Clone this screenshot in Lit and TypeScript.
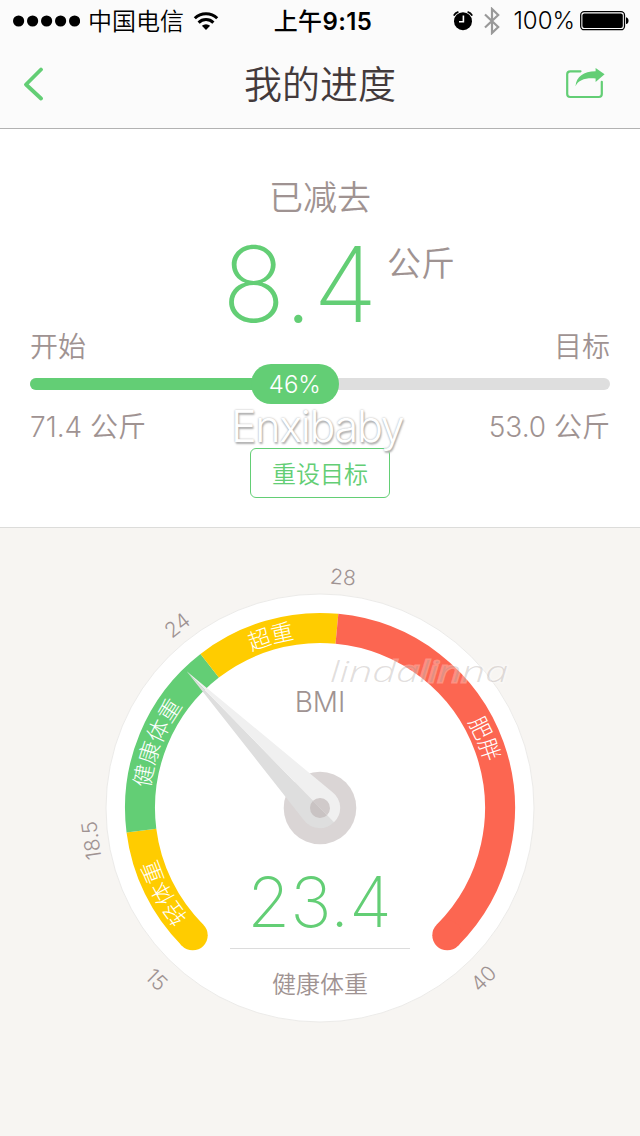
import { LitElement, html, svg, css } from "lit";
import { customElement, property } from "lit/decorators.js";

const CX = 320;
const CY = 280;
const MIN = 15;
const MAX = 40;

/** Dial angle in degrees, measured clockwise from twelve o'clock. */
const angleOf = (bmi: number) => -135 + ((bmi - MIN) / (MAX - MIN)) * 270;

const point = (deg: number, r: number) => {
  const a = (deg * Math.PI) / 180;
  return [CX + r * Math.sin(a), CY - r * Math.cos(a)];
};

const arc = (from: number, to: number, r: number) => {
  const [x1, y1] = point(from, r);
  const [x2, y2] = point(to, r);
  return `M${x1} ${y1}A${r} ${r} 0 ${to - from > 180 ? 1 : 0} 1 ${x2} ${y2}`;
};

const ZONES = [
  { id: "light", from: 15, to: 18.5, label: "轻体重", color: "#ffcc00", mid: -118.5, cap: true },
  { id: "healthy", from: 18.5, to: 24, label: "健康体重", color: "#63ce75", mid: -68.3, cap: false },
  { id: "over", from: 24, to: 28, label: "超重", color: "#ffcc00", mid: -16, cap: false },
  { id: "obese", from: 28, to: 40, label: "肥胖", color: "#fc6651", mid: 67.2, cap: true },
];

/** Scale labels: where each sits on the rim and how far it is turned. */
const TICKS = [
  { value: 15, at: -136.4, turn: 45, r: 237 },
  { value: 18.5, at: -98.1, turn: -98, r: 231 },
  { value: 24, at: -38, turn: -38, r: 232 },
  { value: 28, at: 5.7, turn: 5, r: 232 },
  { value: 40, at: 136.2, turn: -45, r: 236 },
];

@customElement("status-bar")
export class StatusBar extends LitElement {
  static styles = css`
    :host {
      display: grid;
      grid-template-columns: 1fr auto 1fr;
      align-items: center;
      height: 41px;
      padding: 0 11px 0 13px;
      color: #000;
      font-size: 24px;
    }
    .side { display: flex; align-items: center; }
    .right { justify-content: flex-end; }
    .carrier { margin: 0 9px 2px 8px; font-size: 24px; }
    .time { padding: 0 0 2px 4px; font-weight: 600; letter-spacing: 0.4px; }
    .time span { font-weight: 500; }
    .alarm { margin-right: 11px; }
    .bt { margin-right: 13px; }
    .percent { margin-right: 5px; }
    svg { display: block; flex: none; }
  `;

  render() {
    return html`
      <div class="side">
        <svg width="67" height="12" viewBox="0 0 67 12">
          ${[0, 1, 2, 3, 4].map((i) => svg`<circle cx=${5.6 + i * 14} cy="6" r="5.6"/>`)}
        </svg>
        <span class="carrier">中国电信</span>
        <svg width="26" height="20" viewBox="0 0 26 20" fill="none" stroke="#000" stroke-width="3">
          <path d="M1.8 7.2A16 16 0 0 1 24.2 7.2"/>
          <path d="M5.6 11.6A10.5 10.5 0 0 1 20.4 11.6"/>
          <path d="M13 19L8.9 14.8A6 6 0 0 1 17.1 14.8Z" fill="#000" stroke="none"/>
        </svg>
      </div>
      <div class="time"><span>上午</span>9:15</div>
      <div class="side right">
        <svg class="alarm" width="20" height="20" viewBox="0 0 20 20">
          <circle cx="10" cy="10.2" r="9"/>
          <path d="M.8 4.7A7 7 0 0 1 5.4 .9M19.2 4.7A7 7 0 0 0 14.6 .9" fill="none" stroke="#000" stroke-width="1.8"/>
          <path d="M10.4 4.5V10.7H6" fill="none" stroke="#fff" stroke-width="1.6"/>
        </svg>
        <svg class="bt" width="16" height="28" viewBox="0 0 16 28" fill="none" stroke="#999" stroke-width="2.2">
          <path d="M1 7.5L14.2 20L8 26V2L14.2 8L1 20.5"/>
        </svg>
        <span class="percent">100%</span>
        <svg width="49" height="20" viewBox="0 0 49 20">
          <rect x=".7" y=".7" width="43.8" height="18" rx="3.5" fill="#fff" stroke="#000" stroke-width="1.3"/>
          <rect x="2.4" y="2.4" width="40.4" height="14.6" rx="2"/>
          <path d="M46 6.3C49.4 6.8 49.4 12.6 46 13.1Z"/>
        </svg>
      </div>
    `;
  }
}

@customElement("nav-bar")
export class NavBar extends LitElement {
  static styles = css`
    :host {
      display: grid;
      grid-template-columns: 1fr auto 1fr;
      align-items: center;
      height: 87px;
      padding: 0 35px 0 22px;
      border-bottom: 1px solid #b2b2b2;
    }
    .title {
      margin-left: 13px;
      padding-bottom: 2px;
      font-size: 38px;
      line-height: 50px;
      color: #433a3b;
    }
    .share { justify-self: end; margin-bottom: 2px; }
    svg { display: block; }
  `;

  render() {
    return html`
      <svg class="back" width="24" height="36" viewBox="0 0 24 36" fill="none" stroke="#63ce75" stroke-width="3.8" stroke-linecap="round" stroke-linejoin="round">
        <path d="M19 2.5L4 17.5L19 31.5"/>
      </svg>
      <div class="title">我的进度</div>
      <svg class="share" width="39" height="34" viewBox="0 0 39 34" fill="none" stroke="#63ce75" stroke-width="2.2" stroke-linecap="round">
        <path d="M14.5 4.3H4.2Q1.2 4.3 1.2 7.3V27Q1.2 30 4.2 30H32.8Q35.8 30 35.8 27V14.8"/>
        <path d="M9.5 19.2C12.6 12.8 19.2 10.6 29.6 11.4V15L38.6 7.2L29.6 1V4.3C17.5 4.4 10.4 9.6 9.5 19.2Z" fill="#63ce75" stroke="none"/>
      </svg>
    `;
  }
}

@customElement("loss-panel")
export class LossPanel extends LitElement {
  @property({ type: Number }) percent = 46;

  static styles = css`
    :host {
      display: flex;
      flex-direction: column;
      position: relative;
      box-sizing: border-box;
      height: 399px;
      padding: 44px 30px 0;
      background: #fff;
      border-bottom: 1px solid #dcdcda;
      color: #9f9392;
    }
    .caption { text-align: center; font-size: 34px; line-height: 50px; }
    .total {
      display: grid;
      grid-template-columns: 1fr auto 1fr;
      align-items: start;
      height: 104px;
      margin-right: 40px;
    }
    .amount {
      grid-column: 2;
      font-size: 105px;
      line-height: 122px;
      letter-spacing: 0.5px;
      font-weight: 200;
      color: #63ce75;
    }
    .unit { font-size: 34px; line-height: 50px; margin: 16px -40px 0 9px; }
    .row { display: flex; justify-content: space-between; font-size: 28px; line-height: 40px; }
    .track {
      display: flex;
      align-items: center;
      height: 12px;
      margin: 11px 0 17px;
      border-radius: 6px;
      background: #dedede;
    }
    .fill { height: 12px; border-radius: 6px 0 0 6px; background: #63ce75; }
    .pill {
      width: 88px;
      height: 40px;
      margin-left: -46px;
      border-radius: 20px;
      background: #63ce75;
      color: #fff;
      font-size: 24px;
      line-height: 42px;
      text-align: center;
    }
    .reset {
      align-self: center;
      box-sizing: border-box;
      width: 140px;
      height: 50px;
      margin-top: 1px;
      padding: 0 0 2px;
      border: 1px solid #63ce75;
      border-radius: 6px;
      background: #fff;
      color: #63ce75;
      font: inherit;
      font-size: 24px;
    }
    .mark {
      position: absolute;
      left: 231px;
      top: 271px;
      font-size: 43px;
      line-height: 52px;
      letter-spacing: -1.3px;
      color: #fff;
      text-shadow: 0 0 2px #aaa, 1px 2px 2px #b0b0b0;
    }
  `;

  render() {
    return html`
      <div class="caption">已减去</div>
      <div class="total">
        <div class="amount">8.4</div>
        <div class="unit">公斤</div>
      </div>
      <div class="row"><span>开始</span><span>目标</span></div>
      <div class="track">
        <div class="fill" style="width:${this.percent}%"></div>
        <div class="pill">${this.percent}%</div>
      </div>
      <div class="row"><span>71.4 公斤</span><span>53.0 公斤</span></div>
      <button class="reset">重设目标</button>
      <div class="mark">Enxibaby</div>
    `;
  }
}

@customElement("bmi-dial")
export class BmiDial extends LitElement {
  @property({ type: Number }) value = 23.4;

  static styles = css`
    :host { display: block; height: 608px; }
    svg { display: block; }
    .tick { font-size: 21px; font-weight: 300; fill: #9f9392; text-anchor: middle; }
    .zone { font-size: 22.5px; font-weight: 300; fill: #fff; text-anchor: middle; }
    .unit { font-size: 28px; fill: #9f9392; text-anchor: middle; }
    .value { font-size: 69.5px; font-weight: 200; fill: #63ce75; text-anchor: middle; }
    .verdict { font-size: 24px; fill: #9f9392; text-anchor: middle; }
    .mark {
      font-family: "Open Sans", sans-serif;
      font-size: 30px;
      font-style: italic;
      font-weight: 300;
      fill: #9a8f8c;
      fill-opacity: 0.3;
      stroke: #fff;
      stroke-opacity: 0.28;
      stroke-width: 3;
      paint-order: stroke;
    }
  `;

  render() {
    return html`
      <svg width="640" height="608" viewBox="0 0 640 608">
        <circle cx=${CX} cy=${CY} r="214" fill="#fff" stroke="#ecebe9"/>
        ${ZONES.map((z) => {
          const [x, y] = point(z.from === MIN ? -135 : 135, 180);
          return svg`
            <path d=${arc(angleOf(z.from), angleOf(z.to), 180)} fill="none" stroke=${z.color} stroke-width="30"/>
            ${z.cap ? svg`<circle cx=${x} cy=${y} r="15" fill=${z.color}/>` : ""}
            <path id=${z.id} d=${arc(z.mid - 30, z.mid + 30, 171)} fill="none"/>
            <text class="zone"><textPath href=${"#" + z.id} startOffset="50%">${z.label}</textPath></text>
          `;
        })}
        ${TICKS.map((t) => {
          const [x, y] = point(t.at, t.r);
          return svg`<text class="tick" transform="translate(${x} ${y}) rotate(${t.turn})" y="7.5">${t.value}</text>`;
        })}
        <text class="unit" x="320" y="183.5">BMI</text>
        <circle cx=${CX} cy=${CY} r="36.3" fill="#dad5d5"/>
        <g transform="translate(${CX} ${CY}) rotate(${angleOf(this.value)})">
          <path d="M0 -191L-20 -3A20 20 0 0 0 0 20Z" fill="#dedede"/>
          <path d="M0 -191L20 -3A20 20 0 0 1 0 20Z" fill="#f0f0f0"/>
          <path d="M0 -10A10 10 0 0 0 0 10Z" fill="#c9c3c3"/>
          <path d="M0 -10A10 10 0 0 1 0 10Z" fill="#d0caca"/>
        </g>
        <text class="value" x="319.5" y="399">${this.value}</text>
        <path d="M230 420.5H410" stroke="#dcdcdc"/>
        <text class="verdict" x="320" y="465">健康体重</text>
        <text class="mark" x="330" y="154" textLength="178" lengthAdjust="spacingAndGlyphs">lindalinna</text>
      </svg>
    `;
  }
}

@customElement("app-root")
export class AppRoot extends LitElement {
  static styles = css`
    :host {
      display: flex;
      flex-direction: column;
      width: 640px;
      height: 1136px;
      overflow: hidden;
      background: #f7f5f2;
      font-family: Inter, "Noto Sans CJK SC", sans-serif;
      font-weight: 350;
    }
    .top { background: #fbfbfb; }
  `;

  render() {
    return html`
      <div class="top">
        <status-bar></status-bar>
        <nav-bar></nav-bar>
      </div>
      <loss-panel></loss-panel>
      <bmi-dial></bmi-dial>
    `;
  }
}
